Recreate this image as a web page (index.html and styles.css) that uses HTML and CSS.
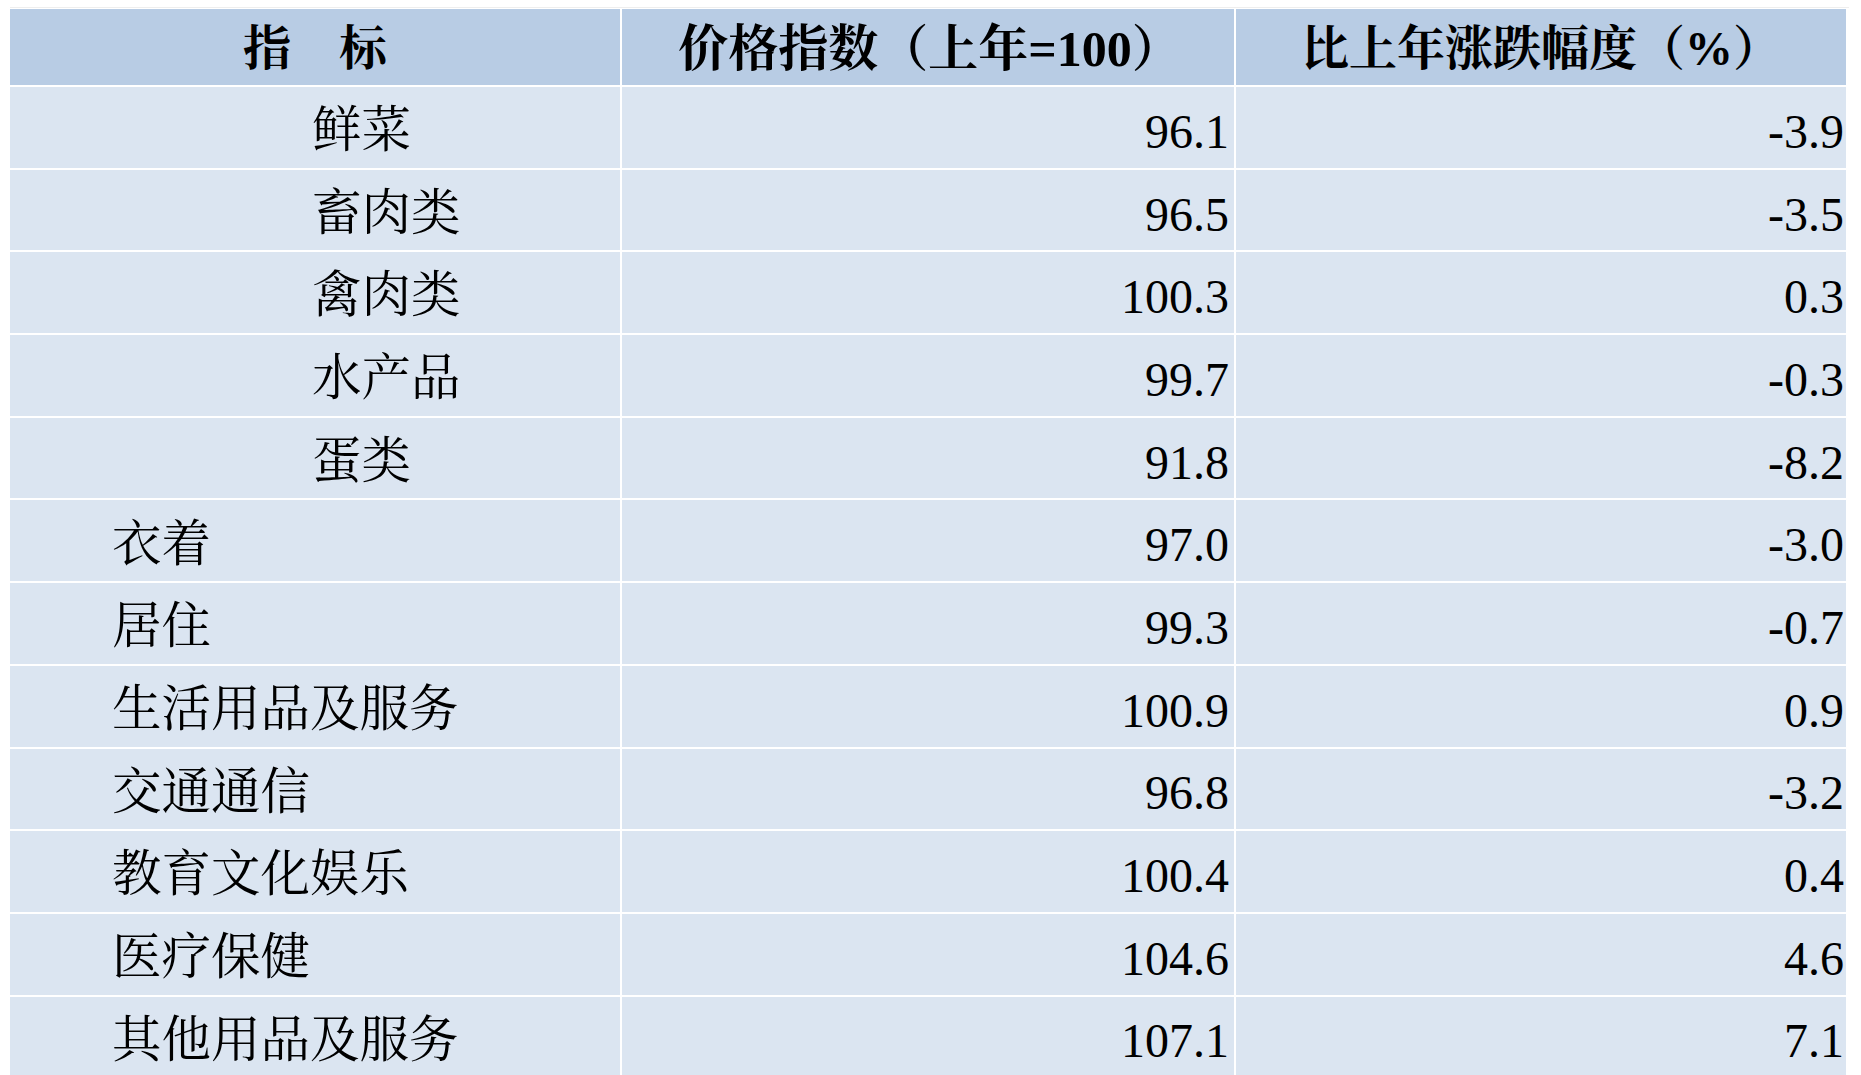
FILE: index.html
```html
<!DOCTYPE html>
<html lang="zh-CN">
<head>
<meta charset="utf-8">
<title>价格指数</title>
<link rel="stylesheet" href="styles.css">
</head>
<body>
<div class="sheet">
  <div class="topline"></div>
  <div class="grid">
    <div class="cell head">指　标</div>
    <div class="cell head wide">价格指数（上年=100）</div>
    <div class="cell head">比上年涨跌幅度（%）</div>

    <div class="cell name sub">鲜菜</div><div class="cell num">96.1</div><div class="cell num last">-3.9</div>
    <div class="cell name sub">畜肉类</div><div class="cell num">96.5</div><div class="cell num last">-3.5</div>
    <div class="cell name sub">禽肉类</div><div class="cell num">100.3</div><div class="cell num last">0.3</div>
    <div class="cell name sub">水产品</div><div class="cell num">99.7</div><div class="cell num last">-0.3</div>
    <div class="cell name sub">蛋类</div><div class="cell num">91.8</div><div class="cell num last">-8.2</div>
    <div class="cell name">衣着</div><div class="cell num">97.0</div><div class="cell num last">-3.0</div>
    <div class="cell name">居住</div><div class="cell num">99.3</div><div class="cell num last">-0.7</div>
    <div class="cell name">生活用品及服务</div><div class="cell num">100.9</div><div class="cell num last">0.9</div>
    <div class="cell name">交通通信</div><div class="cell num">96.8</div><div class="cell num last">-3.2</div>
    <div class="cell name">教育文化娱乐</div><div class="cell num">100.4</div><div class="cell num last">0.4</div>
    <div class="cell name">医疗保健</div><div class="cell num">104.6</div><div class="cell num last">4.6</div>
    <div class="cell name">其他用品及服务</div><div class="cell num">107.1</div><div class="cell num last">7.1</div>
  </div>
</div>
</body>
</html>
```
FILE: styles.css
```css
html, body {
  margin: 0;
  padding: 0;
  background: #ffffff;
  overflow: hidden;
}

.sheet {
  padding: 7px 12px 0 10px;
}

.topline {
  height: 1px;
  background: #eeeeee;
  margin-bottom: 1px;
}

.grid {
  display: grid;
  grid-template-columns: 610px 612px 610px;
  grid-template-rows: 76px repeat(12, 80.7px);
  column-gap: 2px;
  row-gap: 2px;
}

.cell {
  display: flex;
  align-items: center;
  background: #dbe5f1;
  color: #000000;
  font-family: "Liberation Serif", "Noto Serif CJK SC", "Noto Sans CJK SC", serif;
  font-size: 48px;
  line-height: 1;
  white-space: nowrap;
}

.head {
  background: #b8cce4;
  justify-content: center;
  font-weight: bold;
  padding-top: 4px;
}

.head.wide {
  font-size: 50px;
  padding-left: 4px;
}

.name {
  padding-left: 102px;
  padding-top: 7px;
  font-size: 49.5px;
}

.name.sub {
  padding-left: 302px;
}

.num {
  justify-content: flex-end;
  padding-right: 5px;
  padding-top: 9px;
}

.num.last {
  padding-right: 2px;
}
```
